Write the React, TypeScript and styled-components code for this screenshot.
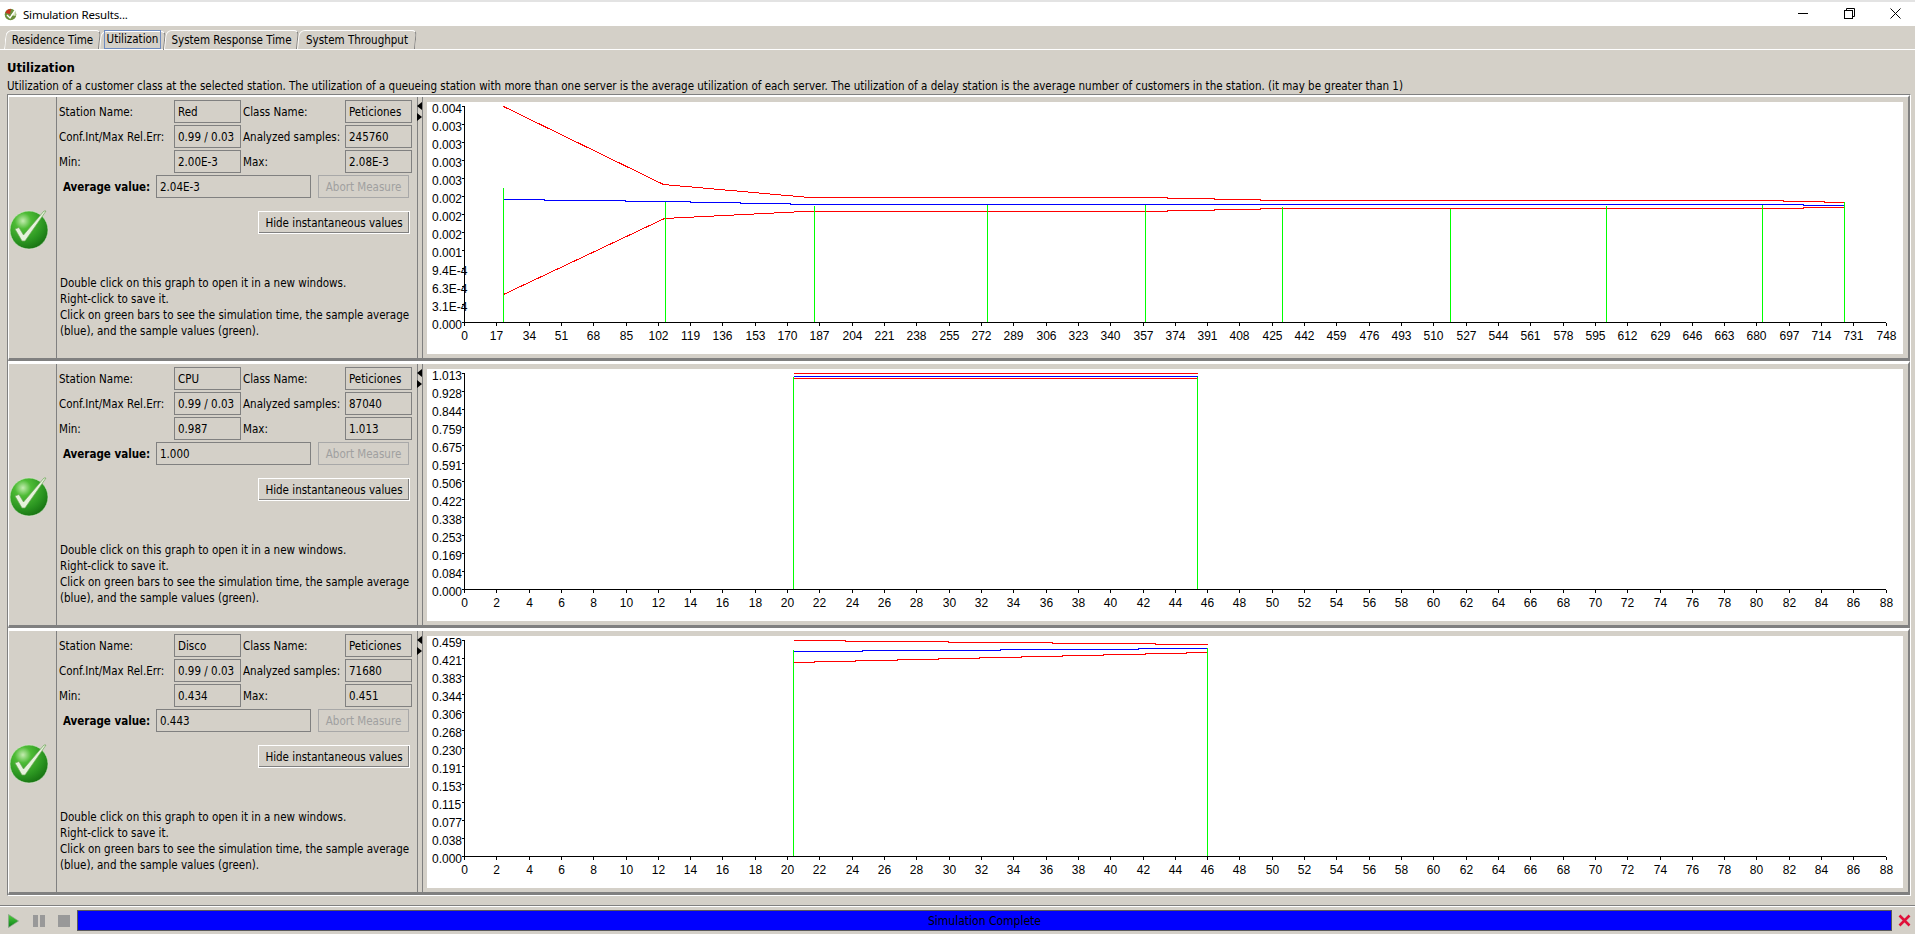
import styled, { createGlobalStyle } from 'styled-components';

const BG = '#d4d0c8';
const GREY = '#808080';
const UI_FONT = '"DejaVu Sans Condensed", "DejaVu Sans", "Noto Sans", sans-serif';

const GlobalStyle = createGlobalStyle`
  html, body { margin: 0; padding: 0; background: ${BG}; }
  body { font-family: ${UI_FONT}; font-size: 11.5px; color: #000; overflow: hidden; }
  * { box-sizing: border-box; }
`;

const Window = styled.div`
  width: 1915px;
  height: 934px;
  display: flex;
  flex-direction: column;
  background: ${BG};
`;

const TitleBar = styled.div`
  height: 26px;
  flex: none;
  background: #fff;
  border-top: 2px solid #e3e3e3;
  display: flex;
  align-items: center;
  padding: 0 14px 0 4px;
`;

const TitleText = styled.div`
  font-family: "Noto Sans", sans-serif;
  font-size: 11.5px;
  letter-spacing: -0.2px;
  margin-left: 6px;
  flex: 1;
`;

const Controls = styled.div`
  display: flex;
  align-items: center;
  gap: 35px;
  margin-bottom: 2px;
`;

const TabStrip = styled.div`
  height: 24px;
  flex: none;
  display: flex;
  align-items: flex-end;
  padding: 0 0 0 5px;
  border-bottom: 1px solid #fff;
`;

const Tab = styled.div<{ $width: number; $active?: boolean }>`
  position: relative;
  width: ${({ $width }) => $width}px;
  height: 19px;
  margin-bottom: ${({ $active }) => ($active ? '-1px' : '0')};
  display: flex;
  align-items: center;
  justify-content: center;
  white-space: nowrap;
  padding: ${({ $active }) => ($active ? '0 0 2px' : '1px 0 0')};

  &::before {
    content: '';
    position: absolute;
    inset: 0;
    border-top: 1px solid #fff;
    border-left: 1px solid #fff;
    border-right: 1px solid ${GREY};
    border-radius: 6px 5px 0 0;
    transform: skewX(-6deg);
  }
`;

const TabLabel = styled.span<{ $active?: boolean }>`
  position: relative;
  padding: 0 2px;
  line-height: 17px;
  outline: ${({ $active }) => ($active ? '1px solid #6f8cc0' : 'none')};
`;

const Intro = styled.div`
  height: 44px;
  flex: none;
  padding: 10px 0 0 7px;
`;

const Heading = styled.h1`
  margin: 0;
  font-size: 13px;
  line-height: 16px;
  font-weight: 700;
`;

const Description = styled.p`
  margin: 2px 0 0;
  line-height: 16px;
  white-space: nowrap;
`;

const Stack = styled.div`
  flex: none;
  margin-left: 7px;
  width: 1904px;
  border-top: 1px solid ${GREY};
  border-left: 1px solid ${GREY};
  border-right: 1px solid #fff;
  border-bottom: 1px solid #fff;
`;

const Panel = styled.section`
  height: 267px;
  display: flex;
  border-top: 3px solid #fff;
  border-bottom: 3px solid ${GREY};
  border-left: 1px solid #fff;
  border-right: 2px solid ${GREY};

  &:first-child {
    height: 266px;
    border-top-width: 2px;
  }
`;

const IconColumn = styled.div`
  width: 48px;
  flex: none;
  display: flex;
  align-items: center;
  justify-content: center;
  padding: 2px 5px 0 0;
  border-right: 1px solid ${GREY};
`;

const InfoColumn = styled.div`
  width: 361px;
  flex: none;
  padding: 3px 4px 0 2px;
  border-right: 1px solid ${GREY};
`;

const InfoGrid = styled.div`
  display: grid;
  grid-template-columns: 115px 67px 104px 67px;
  grid-auto-rows: 23px;
  row-gap: 2px;
`;

const InfoLabel = styled.div<{ $indent?: boolean }>`
  display: flex;
  align-items: center;
  white-space: nowrap;
  padding-left: ${({ $indent }) => ($indent ? '2px' : '0')};
`;

const ValueBox = styled.div`
  display: flex;
  align-items: center;
  padding-left: 3px;
  border: 1px solid ${GREY};
  white-space: nowrap;
`;

const AverageRow = styled.div`
  display: flex;
  height: 23px;
  margin-top: 2px;
  padding-left: 4px;
  align-items: center;
`;

const AverageLabel = styled.div`
  width: 93px;
  font-weight: 700;
  white-space: nowrap;
`;

const AverageBox = styled(ValueBox)`
  width: 155px;
  height: 23px;
`;

const AbortButton = styled.div`
  width: 91px;
  height: 23px;
  margin-left: 7px;
  display: flex;
  align-items: center;
  justify-content: center;
  border: 1px solid #a8a8a8;
  color: #a0a0a0;
  white-space: nowrap;
`;

const ToggleRow = styled.div`
  display: flex;
  justify-content: flex-end;
  margin-top: 13px;
  padding-right: 3px;
`;

const ToggleButton = styled.div`
  width: 152px;
  height: 23px;
  display: flex;
  align-items: center;
  justify-content: center;
  border: 1px solid #fff;
  box-shadow: inset -1px -1px 0 ${GREY};
  white-space: nowrap;
`;

const Help = styled.div`
  margin: 41px 0 0 1px;
  line-height: 16px;
  white-space: nowrap;
`;

const Splitter = styled.div`
  width: 5px;
  flex: none;
  display: flex;
  flex-direction: column;
  gap: 3px;
  padding-top: 5px;
  border-right: 1px solid ${GREY};
`;

const Arrow = styled.div<{ $dir: 'left' | 'right' }>`
  width: 0;
  height: 0;
  margin-left: -1px;
  border-top: 4px solid transparent;
  border-bottom: 4px solid transparent;
  ${({ $dir }) => ($dir === 'left' ? 'border-right: 5px solid #000;' : 'border-left: 5px solid #000;')}
`;

const ChartColumn = styled.div`
  flex: 1;
  min-width: 0;
  padding: 5px 5px 3px 4px;
`;

const ChartSurface = styled.svg`
  display: block;
  width: 1476px;
  height: 252px;
  background: #fff;
  font-family: "Liberation Sans", Arial, sans-serif;
  font-size: 12px;
`;

const Footer = styled.div`
  flex: 1;
  margin-top: 9px;
  padding: 1px 4px 0 8px;
  border-top: 1px solid ${GREY};
  box-shadow: inset 0 1px 0 #fff;
  display: flex;
  align-items: center;
`;

const PlayerButton = styled.svg<{ $gap?: number }>`
  flex: none;
  display: block;
  margin-left: ${({ $gap }) => $gap ?? 0}px;
`;

const Progress = styled.div`
  flex: 1;
  height: 21px;
  margin: 0 6px 0 7px;
  background: #0000ff;
  border: 1px solid #5a5a5a;
  display: flex;
  align-items: center;
  justify-content: center;
  color: #000;
  font-size: 12px;
`;

type Series = [number, number][];

interface ChartData {
  top: number;
  xStep: number;
  yLabels: string[];
  upper: Series;
  mean: Series;
  lower: Series;
  bars: [number, number][];
}

const AXIS_X = 464;
const AXIS_END = 1885.7;
const TICKS = 44;

const CHARTS: ChartData[] = [
  {
    top: 102,
    xStep: 17,
    yLabels: ['0.004', '0.003', '0.003', '0.003', '0.003', '0.002', '0.002', '0.002', '0.001', '9.4E-4', '6.3E-4', '3.1E-4', '0.000'],
    upper: [[503, 106], [663, 184], [809, 197], [1167, 197], [1167, 198], [1214, 198], [1214, 199], [1260, 199], [1260, 200], [1783, 200], [1783, 201], [1824, 201], [1824, 202], [1844, 202]],
    mean: [[503, 199], [544, 199], [544, 200], [625, 200], [625, 201], [690, 201], [690, 202], [740, 202], [740, 203], [790, 203], [790, 204], [1803, 204], [1803, 205], [1844, 205]],
    lower: [[503, 294], [664, 218], [804, 211], [1167, 211], [1167, 210], [1214, 210], [1214, 209], [1260, 209], [1260, 208], [1803, 208], [1803, 207], [1844, 207]],
    bars: [[503, 187], [665, 201], [814, 205], [987, 204], [1145, 204], [1282, 206], [1450, 208], [1606, 205], [1762, 204], [1844, 201]],
  },
  {
    top: 369,
    xStep: 2,
    yLabels: ['1.013', '0.928', '0.844', '0.759', '0.675', '0.591', '0.506', '0.422', '0.338', '0.253', '0.169', '0.084', '0.000'],
    upper: [[793, 373], [1197, 373]],
    mean: [[793, 376], [1197, 376]],
    lower: [[793, 378], [1197, 378]],
    bars: [[793, 376], [1197, 376]],
  },
  {
    top: 636,
    xStep: 2,
    yLabels: ['0.459', '0.421', '0.383', '0.344', '0.306', '0.268', '0.230', '0.191', '0.153', '0.115', '0.077', '0.038', '0.000'],
    upper: [[793, 640], [845, 640], [845, 641], [948, 641], [948, 642], [1052, 642], [1052, 643], [1155, 643], [1155, 644], [1207, 644]],
    mean: [[793, 651], [862, 651], [862, 650], [1000, 650], [1000, 649], [1138, 649], [1138, 648], [1207, 648]],
    lower: [[793, 662], [814, 662], [814, 661], [855, 661], [855, 660], [897, 660], [897, 659], [938, 659], [938, 658], [979, 658], [979, 657], [1021, 657], [1021, 656], [1062, 656], [1062, 655], [1103, 655], [1103, 654], [1145, 654], [1145, 653], [1186, 653], [1186, 652], [1207, 652]],
    bars: [[793, 649], [1207, 647]],
  },
];

const MEASURES = [
  { station: 'Red', samples: '245760', min: '2.00E-3', max: '2.08E-3', average: '2.04E-3' },
  { station: 'CPU', samples: '87040', min: '0.987', max: '1.013', average: '1.000' },
  { station: 'Disco', samples: '71680', min: '0.434', max: '0.451', average: '0.443' },
];

const toPoints = (s: Series) => s.map(([x, y]) => `${x},${y}`).join(' ');

const Chart = ({ data }: { data: ChartData }) => {
  const { top, xStep, yLabels, upper, mean, lower, bars } = data;
  const axisTop = top + 4;
  const axisBottom = top + 220;
  const yGap = (axisBottom - axisTop) / (yLabels.length - 1);
  const xGap = (AXIS_END - AXIS_X) / TICKS;
  return (
    <ChartSurface viewBox={`426.5 ${top - 0.5} 1476 252`} shapeRendering="crispEdges">
      {yLabels.map((label, i) => {
        const y = axisTop + i * yGap;
        return (
          <g key={i}>
            <line x1={AXIS_X - 3} x2={AXIS_X} y1={y} y2={y} stroke="#000" />
            <text x={431.5} y={y + 6.5}>{label}</text>
          </g>
        );
      })}
      {Array.from({ length: TICKS + 1 }, (_, i) => {
        const x = Math.round(AXIS_X + i * xGap);
        return (
          <g key={i}>
            <line x1={x} x2={x} y1={axisBottom} y2={axisBottom + 3} stroke="#000" />
            <text x={x} y={axisBottom + 17} textAnchor="middle">{i * xStep}</text>
          </g>
        );
      })}
      <polyline points={toPoints(upper)} fill="none" stroke="#ff0000" />
      <polyline points={toPoints(lower)} fill="none" stroke="#ff0000" />
      <polyline points={toPoints(mean)} fill="none" stroke="#0000ff" />
      {bars.map(([x, y]) => (
        <line key={x} x1={x} x2={x} y1={y} y2={axisBottom} stroke="#00ff00" />
      ))}
      <line x1={AXIS_X} x2={AXIS_X} y1={axisTop} y2={axisBottom} stroke="#000" />
      <line x1={AXIS_X} x2={AXIS_END} y1={axisBottom} y2={axisBottom} stroke="#000" />
    </ChartSurface>
  );
};

const CheckBall = ({ id }: { id: string }) => (
  <svg width="42" height="42" viewBox="0 0 42 42">
    <defs>
      <radialGradient id={id} cx="0.34" cy="0.26" r="0.85">
        <stop offset="0" stopColor="#c4ecb0" />
        <stop offset="0.25" stopColor="#4dbb35" />
        <stop offset="0.65" stopColor="#2a9420" />
        <stop offset="1" stopColor="#12680e" />
      </radialGradient>
    </defs>
    <circle cx="20" cy="22" r="19" fill={`url(#${id})`} stroke="#d8ecd0" strokeWidth="0.6" />
    <path d="M6 21 L10 19.5 L14.5 27 L35 3 L37 3 L16 33 L13 33 Z" fill="#e6f2dc" stroke="#6fa85a" strokeWidth="0.7" />
  </svg>
);

const WindowIcon = () => (
  <svg width="13" height="13" viewBox="0 0 13 13">
    <circle cx="6.5" cy="6.5" r="5.8" fill="#6a8f3a" />
    <path d="M1.5 5 A5.5 5.5 0 0 1 7 1 L6 6 Z" fill="#c8321e" />
    <path d="M7 7 L12 3 L11.5 8 Z" fill="#d9e6c0" />
    <path d="M3 7 L6 10 L11 2.5" fill="none" stroke="#fff" strokeWidth="1.4" />
  </svg>
);

const WindowControls = () => (
  <Controls>
    <svg width="11" height="11" viewBox="0 0 11 11"><path d="M0 5.5 H10" stroke="#000" /></svg>
    <svg width="11" height="11" viewBox="0 0 11 11" fill="none" stroke="#000">
      <path d="M2.5 2.5 V0.5 H10.5 V8.5 H8.5" />
      <rect x="0.5" y="2.5" width="8" height="8" />
    </svg>
    <svg width="11" height="11" viewBox="0 0 11 11" fill="none" stroke="#000"><path d="M0.5 0.5 L10.5 10.5 M10.5 0.5 L0.5 10.5" /></svg>
  </Controls>
);

const App = () => (
  <Window>
    <GlobalStyle />
    <TitleBar>
      <WindowIcon />
      <TitleText>Simulation Results...</TitleText>
      <WindowControls />
    </TitleBar>
    <TabStrip>
      <Tab $width={95}><TabLabel>Residence Time</TabLabel></Tab>
      <Tab $width={65} $active><TabLabel $active>Utilization</TabLabel></Tab>
      <Tab $width={133}><TabLabel>System Response Time</TabLabel></Tab>
      <Tab $width={118}><TabLabel>System Throughput</TabLabel></Tab>
    </TabStrip>
    <Intro>
      <Heading>Utilization</Heading>
      <Description>
        Utilization of a customer class at the selected station. The utilization of a queueing station with more than one server is the average utilization of each server. The utilization of a delay station is the average number of customers in the station. (it may be greater than 1)
      </Description>
    </Intro>
    <Stack>
      {MEASURES.map((m, i) => (
        <Panel key={m.station}>
          <IconColumn><CheckBall id={`ball-${i}`} /></IconColumn>
          <InfoColumn>
            <InfoGrid>
              <InfoLabel>Station Name:</InfoLabel>
              <ValueBox>{m.station}</ValueBox>
              <InfoLabel $indent>Class Name:</InfoLabel>
              <ValueBox>Peticiones</ValueBox>
              <InfoLabel>Conf.Int/Max Rel.Err:</InfoLabel>
              <ValueBox>0.99 / 0.03</ValueBox>
              <InfoLabel $indent>Analyzed samples:</InfoLabel>
              <ValueBox>{m.samples}</ValueBox>
              <InfoLabel>Min:</InfoLabel>
              <ValueBox>{m.min}</ValueBox>
              <InfoLabel $indent>Max:</InfoLabel>
              <ValueBox>{m.max}</ValueBox>
            </InfoGrid>
            <AverageRow>
              <AverageLabel>Average value:</AverageLabel>
              <AverageBox>{m.average}</AverageBox>
              <AbortButton>Abort Measure</AbortButton>
            </AverageRow>
            <ToggleRow><ToggleButton>Hide instantaneous values</ToggleButton></ToggleRow>
            <Help>
              Double click on this graph to open it in a new windows.<br />
              Right-click to save it.<br />
              Click on green bars to see the simulation time, the sample average<br />
              (blue), and the sample values (green).
            </Help>
          </InfoColumn>
          <Splitter>
            <Arrow $dir="left" />
            <Arrow $dir="right" />
          </Splitter>
          <ChartColumn><Chart data={CHARTS[i]} /></ChartColumn>
        </Panel>
      ))}
    </Stack>
    <Footer>
      <PlayerButton width="11" height="14" viewBox="0 0 11 14">
        <defs>
          <linearGradient id="play" x1="0" y1="0" x2="0" y2="1">
            <stop offset="0" stopColor="#4fd03c" />
            <stop offset="1" stopColor="#0c7f1a" />
          </linearGradient>
        </defs>
        <path d="M0.5 0.5 L10.5 7 L0.5 13.5 Z" fill="url(#play)" stroke="#88a088" strokeWidth="0.7" />
      </PlayerButton>
      <PlayerButton width="12" height="12" viewBox="0 0 12 12" $gap={14}>
        <rect x="0" y="0" width="5" height="12" fill="#999" />
        <rect x="7" y="0" width="5" height="12" fill="#999" />
      </PlayerButton>
      <PlayerButton width="12" height="12" viewBox="0 0 12 12" $gap={13}>
        <rect width="12" height="12" fill="#999" />
      </PlayerButton>
      <Progress>Simulation Complete</Progress>
      <PlayerButton width="13" height="13" viewBox="0 0 13 13">
        <path d="M1.5 1.5 L11.5 11.5 M11.5 1.5 L1.5 11.5" stroke="#e0103a" strokeWidth="2.6" />
      </PlayerButton>
    </Footer>
  </Window>
);

export default App;
